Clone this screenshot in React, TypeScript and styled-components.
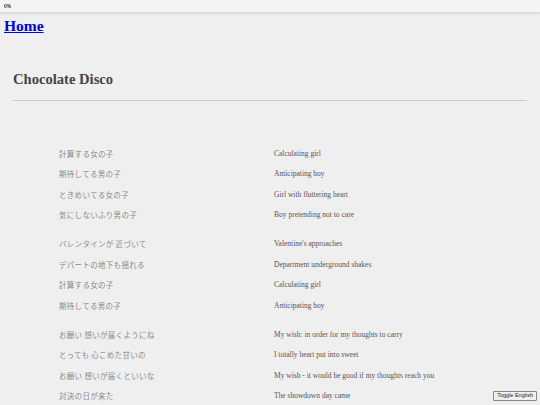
import React, { useState } from 'react';
import styled, { createGlobalStyle } from 'styled-components';

const GlobalStyle = createGlobalStyle`
  html, body {
    margin: 0;
    padding: 0;
    background: #efefef;
  }
  body {
    font-family: "Liberation Serif", "Times New Roman", serif;
  }
`;

const ProgressBar = styled.div`
  position: fixed;
  top: 0;
  left: 0;
  right: 0;
  height: 12px;
  background: #f4f4f4;
  box-shadow: 0 1px 3px rgba(0, 0, 0, 0.15);
  font-family: "Liberation Sans", Arial, sans-serif;
  font-size: 5px;
  font-weight: bold;
  color: #333;
  display: flex;
  align-items: center;
  padding-left: 4px;
  z-index: 2;
`;

const Page = styled.div`
  padding-top: 16px;
`;

const HomeLink = styled.a`
  display: inline-block;
  margin-left: 4px;
  font-size: 15.5px;
  font-weight: bold;
  color: #0000ee;
  text-decoration: underline;
  line-height: 20px;
  vertical-align: top;
`;

const Header = styled.header`
  margin: 33px 13px 0;
  padding-bottom: 11px;
  border-bottom: 1px solid #cccccc;
`;

const Title = styled.h1`
  margin: 0;
  font-size: 14.6px;
  font-weight: bold;
  color: #444;
  line-height: 20px;
`;

const Lyrics = styled.div`
  margin: 42px 0 0 59px;
  display: flex;
  flex-direction: column;
  gap: 8.5px;
`;

const Stanza = styled.div`
  display: flex;
  flex-direction: column;
`;

const Line = styled.div`
  display: grid;
  grid-template-columns: 215px 1fr;
  height: 20.5px;
  align-items: center;
  font-size: 7.5px;
`;

const Jp = styled.span`
  font-family: "Noto Sans CJK JP", sans-serif;
  color: #8a8a8a;
  letter-spacing: 0.3px;
`;

const En = styled.span`
  color: #555;
`;

const ToggleButton = styled.button`
  position: fixed;
  right: 3px;
  bottom: 4px;
  height: 10px;
  padding: 0 3px;
  font-family: "Liberation Sans", Arial, sans-serif;
  font-size: 5.5px;
  color: #222;
  background: #f0f0f0;
  border: 1px solid #888;
  border-radius: 1px;
  line-height: 1;
`;

const stanzas: [string, string][][] = [
  [
    ['計算する女の子', 'Calculating girl'],
    ['期待してる男の子', 'Anticipating boy'],
    ['ときめいてる女の子', 'Girl with fluttering heart'],
    ['気にしないふり男の子', 'Boy pretending not to care'],
  ],
  [
    ['バレンタインが 近づいて', "Valentine's approaches"],
    ['デパートの地下も揺れる', 'Department underground shakes'],
    ['計算する女の子', 'Calculating girl'],
    ['期待してる男の子', 'Anticipating boy'],
  ],
  [
    ['お願い 想いが届くようにね', 'My wish: in order for my thoughts to carry'],
    ['とっても 心こめた甘いの', 'I totally heart put into sweet'],
    ['お願い 想いが届くといいな', 'My wish - it would be good if my thoughts reach you'],
    ['対決の日が来た', 'The showdown day came'],
  ],
];

export default function App() {
  const [showEnglish, setShowEnglish] = useState(true);
  return (
    <>
      <GlobalStyle />
      <ProgressBar>0%</ProgressBar>
      <Page>
        <HomeLink href="#">Home</HomeLink>
        <Header>
          <Title>Chocolate Disco</Title>
        </Header>
        <Lyrics>
          {stanzas.map((stanza, i) => (
            <Stanza key={i}>
              {stanza.map(([jp, en], j) => (
                <Line key={j}>
                  <Jp>{jp}</Jp>
                  <En>{showEnglish ? en : ''}</En>
                </Line>
              ))}
            </Stanza>
          ))}
        </Lyrics>
      </Page>
      <ToggleButton onClick={() => setShowEnglish(v => !v)}>Toggle English</ToggleButton>
    </>
  );
}
